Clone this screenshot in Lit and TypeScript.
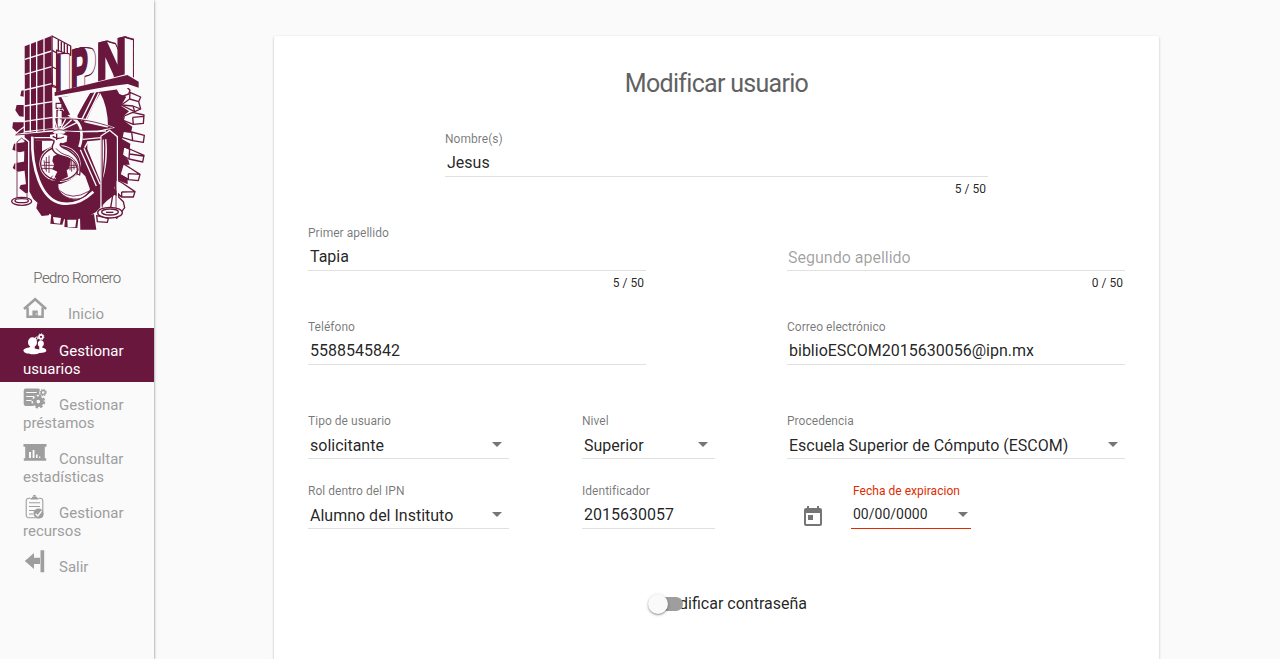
import { LitElement, html, css, svg } from "lit";
import { customElement, property } from "lit/decorators.js";

@customElement("ipn-logo")
class IpnLogo extends LitElement {
  static styles = css`
    :host { display: block; width: 160px; height: 210px; }
    svg { display: block; }
    .m { fill: #6a173e; }
    .w { fill: #fafafa; }
    .o { fill: #fafafa; stroke: #6a173e; stroke-width: 4; stroke-linejoin: round; }
    .ml { fill: none; stroke: #6a173e; stroke-width: 4; }
    .thin { fill: none; stroke: #6a173e; stroke-width: 2.5; }
    .wl { fill: none; stroke: #fafafa; stroke-width: 4; }
    .ww { fill: none; stroke: #fafafa; stroke-width: 8; }
    .letter { font-family: "Liberation Sans", Arial, sans-serif; font-weight: 700; text-rendering: geometricPrecision; }
    .edge { fill: #6a173e; stroke: #6a173e; stroke-width: 10; }
    .face { fill: #fafafa; stroke: #fafafa; stroke-width: 2; }
    .front { fill: #6a173e; stroke: #6a173e; stroke-width: 8; }
  `;
  letter(ch: string, x: number, y: number, sx: number, size: number, skew: number, depth: number, drop: number) {
    const steps = [1, 0.9, 0.8, 0.7, 0.6, 0.5, 0.4, 0.3, 0.2, 0.1];
    const at = (k: number) => `translate(${x + depth * k} ${y + drop * k}) skewY(${skew}) scale(${sx} 1)`;
    const id = `letter-${ch}`;
    return svg`
      <defs><text id=${id} class="letter" font-size=${size}>${ch}</text></defs>
      ${steps.map((k) => svg`<use href="#${id}" class="edge" transform=${at(k)}></use>`)}
      ${steps.map((k) => svg`<use href="#${id}" class="face" transform=${at(k)}></use>`)}
      <use href="#${id}" class="front" transform=${at(0)}></use>`;
  }
  render() {
    return html`<svg width="160" height="210" viewBox="0 0 480 630">
      <g class="o">
        <path d="M350 185L375 181L390 196L386 207L366 214L348 205Z"/>
        <path d="M390 202L422 216L416 230L422 252L404 260L364 240L389 222Z"/>
        <path d="M389 222L416 230M364 240L399 243L422 252M399 243L404 260"/>
        <path d="M373 273L398 262L432 270L430 295L400 298L370 286ZM398 277L432 274M398 277L400 298"/>
        <path d="M370 318L395 321L433 331L430 352L398 347L366 337ZM395 321L398 347"/>
        <path d="M371 365L389 372L432 391L428 411L387 402L367 391ZM389 372L387 402M389 387L430 393"/>
        <path d="M370 416L395 432L420 448L415 467L385 464L360 449ZM385 446L420 448M385 446L385 464"/>
        <path d="M345 462L367 474L405 500L400 516L365 516L347 500ZM365 501L405 500M365 501V516"/>
        <path d="M340 500L370 530L374 548L350 580L330 560Z"/>
        <path d="M290 572L325 580L322 592L292 590Z"/>
      </g>
      <path class="m" d="M75 195L64 197L61 213L76 216ZM76 240H50L46 256L58 274L76 276ZM76 292H39L37 309L57 327L78 320ZM76 351L42 356L37 374L58 382L76 378ZM78 409L44 415L38 429L54 440L82 436ZM96 475L62 480L58 490L77 505L104 497ZM112 534L109 550L125 573L146 571L158 548ZM154 566L151 596L187 599L196 570ZM196 573L193 606L232 609L236 573ZM240 575L241 614L289 614L282 567Z"/>
      <path class="m" d="M76 238L162 218L300 197L345 184L358 207L379 215L363 242L387 259L372 272L369 285L397 305L393 323L369 321L366 342L391 356L389 375L371 366L368 388L385 405L389 419L369 419L360 447L383 460L383 478L350 464L343 490L365 516L343 510L320 528L287 562L254 580L200 585L150 568L100 522L78 480L72 420Z"/>
      <path class="w" d="M159 576L183 579L180 596L162 594ZM202 584H229L226 606H203Z"/>

      <path class="w" d="M163 216L275 198L238 280H158ZM301 205Q324 245 324 308L248 291Z"/>
      <path class="m" d="M174 216H184L215 278H158V306H240L232 272L270 202L300 197L257 292L240 306H184V258H192Z"/>
      <path class="w" d="M202 233L242 226L219 263ZM202 270L214 280H225L232 268Z"/>
      <path class="wl" d="M187 216L213 266H230L272 198M287 199L244 286M297 203L254 292"/>
      <path class="o" d="M168 235H186V250H168ZM171 256H187V306H171Z"/>
      <path class="w" d="M106 347H160V362L123 380L108 376ZM262 349L302 345V470L262 372Z"/>
      <path class="m" d="M97 309H334L322 318L303 330V340H100Z"/>
      <path class="wl" d="M103 338H158M248 320L318 318M248 343L303 338"/>
      <path class="m" d="M104 347H126V442L112 430Z"/>
      <path class="ww" d="M97 335C94 425 121 525 185 535Q235 543 280 500"/>
      <path class="ww" d="M219 281C250 296 248 340 238 366"/>
      <path class="wl" d="M241 374L289 483M252 370L300 478M264 350L254 368"/>
      <path class="w" d="M319 342C324 391 318 440 306 467V344Z"/>
      <path class="ml" d="M313 335Q318 400 306 462"/>

      <ellipse class="w" cx="180" cy="416" rx="62" ry="55"/>
      <ellipse class="ml" cx="180" cy="416" rx="58" ry="50"/>
      <path class="thin" d="M125 421H234M126 430Q178 436 232 426M139 396V440M147 392V444M132 406L136 434M215 398V440M210 404V436M222 404V434M135 412H150"/>
      <path class="m" d="M160 394L188 380L196 397L213 402L206 432L200 436L204 455L182 466L164 456L172 440L157 433L163 420L157 408Z"/>
      <path class="thin" d="M190 390L178 420L186 430L178 458" stroke-opacity="0"/>
      <path class="m" d="M146 492L171 455L182 462L173 492L166 500Z"/>
      <path class="w" d="M174 478C200 474 226 458 240 438L256 454L270 493C258 512 245 521 228 523C203 524 170 505 174 478Z"/>
      <path class="thin" d="M174 478C170 505 203 524 230 522C248 521 260 512 272 499M178 496Q215 530 268 498M143 490L170 452M136 482L158 452"/>
      <path class="o" d="M162 352C148 374 165 389 190 394C220 401 236 420 231 447L239 450C246 410 227 388 201 374C175 363 177 357 188 352L184 340L162 343Z"/>
      <path class="thin" d="M168 370Q180 386 207 393Q235 407 235 437"/>
      <path class="w" d="M150 329L178 325L202 332L200 350L188 355L172 349L150 340Z"/>
      <path class="ml" d="M158 334Q174 345 192 336M170 324V345"/>

      <path class="wl" d="M48 325C93 283 140 272 194 280C247 278 299 290 339 308L293 320L154 318L48 329Z"/>
      <path class="thin" d="M48 329C93 292 143 277 192 282C241 280 293 291 336 307M46 330L171 321L339 308"/>
      <path class="wl" d="M174 318L128 293M174 318L143 284M174 318L162 280M177 318V250M178 318L197 282M178 318L215 284M178 318L232 292"/>
      <path class="w" d="M155 318Q178 306 201 318L192 326H163Z"/>
      <path class="thin" d="M158 319Q178 309 198 319"/>

      <path class="wl" d="M48 523V350L65 333L86 350V523M303 548V333L329 316L352 335V555"/>
      <path class="thin" d="M51 523V351L65 339L81 354V519M307 548V336L328 321L348 341V552"/>
      <g class="o"><ellipse cx="65" cy="529" rx="30" ry="12"/><ellipse cx="65" cy="527" rx="20" ry="6"/>
      <ellipse cx="330" cy="563" rx="37" ry="16"/><ellipse cx="330" cy="561" rx="25" ry="9"/><path d="M318 562H340"/></g>

      <path class="w" d="M71 59L156 29L218 61V91L188 84L166 213L166 310L71 323Z"/>
      <path class="m" d="M74 64L154 33L158 310L75 318Z"/>
      <path class="wl" d="M91 55V322M110 48V322M132 39V318M74 103L155 78M74 148L155 125M74 195L155 176M74 243L157 230M74 289L158 277"/>
      <path class="o" d="M156 33L212 63V91L170 75L171 188L157 185Z"/>
      <path class="ml" d="M157 76L170 84M157 126L170 132M157 180L171 186M175 45V80M184 50V82M193 54V85M202 59V87"/>

      ${this.letter("I", 165, 209, 0.42, 172, 3, 27, -2)}
      ${this.letter("P", 212, 194, 0.46, 168, -14, 24, 2)}
      ${this.letter("N", 289, 178, 0.72, 175, -13, 27, 8)}
      <path class="w" d="M160 204L382 146L419 168V192L389 188L162 219Z"/>
      <path class="m" d="M164 202L382 150L416 170V188L383 177L359 180L320 185L164 213Z"/>
    </svg>`;
  }
}

const icons: Record<string, unknown> = {
  home: svg`<path d="M1 14L12.1 4.2 23.2 14M4.6 12.5v9.3h15v-9.3" fill="none" stroke="currentColor" stroke-width="2.5"/><path d="M9.4 15.5h5.4V22H9.4z" fill="currentColor"/><path d="M12.7 18.2h1v1.2h-1z" fill="#fafafa"/>`,
  users: svg`<g fill="currentColor"><ellipse cx="9.5" cy="10.3" rx="4.5" ry="5"/><path d="M7.5 14h4.2v2.5l4.5 1v-3c-2-1-2-6 1.6-6.3 3.8.3 3.8 5.2 1.5 6.3v1.3c3 .5 4.2 1.7 4 3-.6 2-4 2-7 2.2-2 2-13.4 2-15.5-1.4-1.4-2 1.5-3.6 5.5-4z"/></g><g fill="none" stroke="currentColor"><circle cx="18" cy="4.8" r="2" stroke-width="1.7"/><circle cx="18" cy="4.8" r="3" stroke-width="1" stroke-dasharray="1.1 1.2"/><circle cx="13.6" cy="6.2" r="1.2" stroke-width="1"/></g>`,
  loans: svg`<rect x=".7" y="2.5" width="16.5" height="17.5" rx="2.2" fill="currentColor"/><path d="M3.2 6.5h10.5M3.2 10.5h8.5M3.2 14.5h6" stroke="#fafafa" stroke-width="1"/><circle cx="15.3" cy="15.6" r="6.8" fill="#fafafa"/><circle cx="20.2" cy="6.5" r="4" fill="#fafafa"/><g fill="none" stroke="currentColor"><circle cx="15.3" cy="15.6" r="3.6" stroke-width="3.6"/><circle cx="15.3" cy="15.6" r="5.9" stroke-width="2" stroke-dasharray="2.5 2.134"/><circle cx="20.2" cy="6.5" r="2" stroke-width="1.5"/><circle cx="20.2" cy="6.5" r="3.1" stroke-width="1.1" stroke-dasharray="1.2 1.234"/></g>`,
  stats: svg`<path d="M.5 4h23v2.8h-1.7v11.5h1.4v2.4H.8v-2.4h1.4V6.8H.5z" fill="currentColor"/><path d="M6 12h2v6H6zM9.6 10h1.9v8H9.6zM13 14.5h1.6V18H13zM16 16.5h1.3V18H16z" fill="#fafafa"/>`,
  resources: svg`<g fill="none" stroke="currentColor" transform="translate(0 .5)"><path d="M7.5 3.7H6a2.6 2.6 0 0 0-2.8 2.6v14.5A2.6 2.6 0 0 0 6 23.3h11a2.6 2.6 0 0 0 2.8-2.5V6.3A2.6 2.6 0 0 0 17 3.7h-1.5" stroke-width="1.1"/><path d="M7.5 4.2h8M9 2.9h5M10.2 1.2h2.5" stroke-width="1.5"/><path d="M6 8.3h11M6 12h11M6 16h6M6 19.5h4" stroke-width="1.1"/></g><circle cx="15.5" cy="19.5" r="5" fill="currentColor"/><path d="M12.6 19.8l2.2 2.2 3.8-5" fill="none" stroke="#fafafa" stroke-width="1.3"/>`,
  exit: svg`<path d="M1.8 13L11 5v4.7h6v6.2h-6v5zM17.5 2.2h3.7v22h-3.7z" fill="currentColor"/>`,
};

@customElement("form-field")
class FormField extends LitElement {
  @property() label = "";
  @property() value = "";
  @property() counter = "";
  @property({ type: Boolean }) select = false;
  @property({ type: Boolean }) date = false;
  static styles = css`
    :host { display: block; height: 70px; color: rgba(0,0,0,.87); }
    .label { height: 15px; font-size: 12px; line-height: 14px; letter-spacing: .03px; color: rgba(0,0,0,.54); white-space: nowrap; }
    .box { box-sizing: border-box; height: 30px; display: flex; align-items: center; justify-content: space-between; padding: 2px 2px 0; border-bottom: 1px solid #e0e0e0; font-size: 16px; letter-spacing: 0; white-space: nowrap; }
    .empty { color: rgba(0,0,0,.38); padding-left: 1px; padding-top: 4px; }
    .sel { padding-top: 4px; padding-right: 7px; }
    .arrow { border: 5.5px solid transparent; border-top-color: #757575; border-bottom: 0; margin-bottom: 2px; }
    .counter { text-align: right; font-size: 12px; line-height: 14px; padding: 5px 2px 0; }
    .date-label { color: #dd2c00; padding-left: 2px; }
    .date { border-color: #dd2c00; font-size: 14px; padding: 1px 3px 0 2px; }
    .date .arrow { margin-bottom: 0; }
  `;
  render() {
    const cls = ["box", this.select ? "sel" : "", this.date ? "date" : "", this.value ? "" : "empty"].join(" ");
    return html`
      <div class="label ${this.date ? "date-label" : ""}">${this.value ? this.label : ""}</div>
      <div class=${cls}><span>${this.value || this.label}</span>${this.select || this.date ? html`<i class="arrow"></i>` : ""}</div>
      ${this.counter ? html`<div class="counter">${this.counter}</div>` : ""}`;
  }
}

@customElement("app-root")
class AppRoot extends LitElement {
  static styles = css`
    :host { display: flex; height: 659px; overflow: hidden; background: #fafafa; font-family: Roboto, sans-serif; color: rgba(0,0,0,.87); }
    .side { box-sizing: border-box; width: 154px; flex: none; padding-top: 25px; box-shadow: 0 1px 3px rgba(0,0,0,.4), 0 1px 1px rgba(0,0,0,.3); overflow: visible; }
    .logo { margin-right: -6px; }
    .name { height: 57px; box-sizing: border-box; padding-top: 34px; text-align: center; font-size: 15px; line-height: 18px; font-weight: 300; letter-spacing: -.6px; color: #616161; }
    .item { padding: 4px 0 4px 23px; font-size: 15px; line-height: 18px; letter-spacing: 0; color: #9e9e9e; }
    .item svg { width: 25px; height: 24px; vertical-align: baseline; margin-right: 11px; overflow: visible; }
    .item.wide { padding-top: 3px; padding-bottom: 5px; }
    .item.wide svg { margin-right: 20px; }
    .item.active { background: #6a173e; color: #fff; }
    .main { flex: 1; min-width: 0; padding: 36px 121px 0 120px; }
    .card { box-sizing: border-box; height: 720px; padding: 31px 34px 0; background: #fff; border-radius: 2px; box-shadow: 0 1px 3px rgba(0,0,0,.2), 0 1px 1px rgba(0,0,0,.14), 0 2px 1px -1px rgba(0,0,0,.12); }
    h1 { box-sizing: border-box; margin: 0; height: 65px; padding-top: 1px; text-align: center; font-size: 25px; line-height: 32px; font-weight: 400; letter-spacing: -.7px; color: #616161; }
    .row { display: grid; height: 94px; }
    .one { grid-template-columns: 543px; padding-left: 137px; }
    .two { grid-template-columns: 338px 338px; column-gap: 141px; }
    .three { grid-template-columns: 274px 205px 338px; }
    .three > :nth-child(1) { margin-right: 73px; }
    .three > :nth-child(2) { margin-right: 72px; }
    .short { height: 70px; }
    .when { display: flex; padding-left: 14px; }
    .when svg { margin: 21px 26px 0 0; width: 24px; height: 24px; flex: none; }
    .when form-field { width: 120px; }
    .password { position: relative; width: 160px; height: 24px; margin: 38px 0 0 340px; display: flex; align-items: center; }
    .caption { margin: 0 1px 2px auto; font-size: 16px; white-space: nowrap; }
    .bar { position: absolute; left: 3px; top: 5px; width: 32px; height: 14px; border-radius: 7px; background: #9e9e9e; }
    .thumb { position: absolute; left: 0; top: 2px; width: 20px; height: 20px; border-radius: 50%; background: #fafafa; box-shadow: 0 1px 3px rgba(0,0,0,.3), 0 1px 1px rgba(0,0,0,.2); }
  `;
  items = [
    { icon: "home", text: "Inicio", cls: "wide" },
    { icon: "users", text: "Gestionar usuarios", cls: "active" },
    { icon: "loans", text: "Gestionar préstamos", cls: "" },
    { icon: "stats", text: "Consultar estadísticas", cls: "" },
    { icon: "resources", text: "Gestionar recursos", cls: "" },
    { icon: "exit", text: "Salir", cls: "" },
  ];
  render() {
    return html`
      <nav class="side">
        <ipn-logo class="logo"></ipn-logo>
        <div class="name">Pedro Romero</div>
        ${this.items.map((i) => html`<div class="item ${i.cls}"><svg viewBox="0 0 25 24">${icons[i.icon]}</svg>${i.text}</div>`)}
      </nav>
      <main class="main">
        <section class="card">
          <h1>Modificar usuario</h1>
          <div class="row one"><form-field label="Nombre(s)" value="Jesus" counter="5 / 50"></form-field></div>
          <div class="row two">
            <form-field label="Primer apellido" value="Tapia" counter="5 / 50"></form-field>
            <form-field label="Segundo apellido" counter="0 / 50"></form-field>
          </div>
          <div class="row two">
            <form-field label="Teléfono" value="5588545842"></form-field>
            <form-field label="Correo electrónico" value="biblioESCOM2015630056@ipn.mx"></form-field>
          </div>
          <div class="row three short">
            <form-field select label="Tipo de usuario" value="solicitante"></form-field>
            <form-field select label="Nivel" value="Superior"></form-field>
            <form-field select label="Procedencia" value="Escuela Superior de Cómputo (ESCOM)"></form-field>
          </div>
          <div class="row three short">
            <form-field select label="Rol dentro del IPN" value="Alumno del Instituto"></form-field>
            <form-field label="Identificador" value="2015630057"></form-field>
            <div class="when">
              <svg viewBox="0 0 24 24"><path fill="#757575" d="M7 10h5v5H7zM19 3h-1V1h-2v2H8V1H6v2H5a2 2 0 0 0-2 2v14a2 2 0 0 0 2 2h14a2 2 0 0 0 2-2V5a2 2 0 0 0-2-2zm0 16H5V8h14z"/></svg>
              <form-field date label="Fecha de expiracion" value="00/00/0000"></form-field>
            </div>
          </div>
          <div class="password"><span class="caption">Modificar contraseña</span><i class="bar"></i><i class="thumb"></i></div>
        </section>
      </main>`;
  }
}
